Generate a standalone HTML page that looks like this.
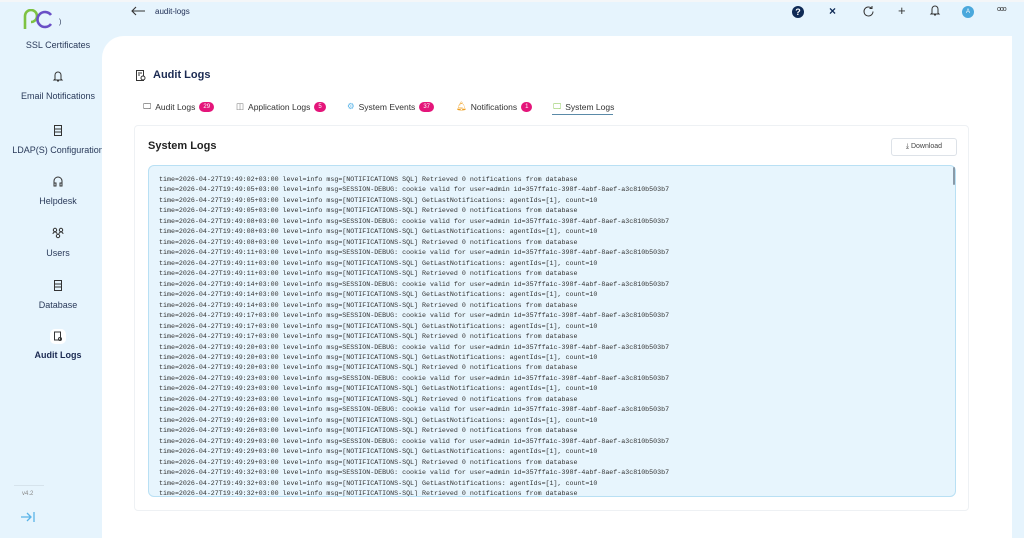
<!DOCTYPE html>
<html><head><meta charset="utf-8"><style>
*{margin:0;padding:0;box-sizing:border-box}
body{width:1024px;height:538px;overflow:hidden;background:#e6f4fd;font-family:"Liberation Sans",sans-serif;position:relative;color:#1f2d4d}
.side{position:absolute;left:0;top:0;width:102px;height:538px}
.nav{position:absolute;left:0;width:116px;text-align:center;font-size:9px;color:#2a3a5a}
.nav svg{display:block;margin:0 auto 8px}
.main{position:absolute;left:102px;top:36px;width:910px;height:502px;background:#fff;border-top-left-radius:22px}
.top{position:absolute;top:0;left:0;width:1024px;height:2px;background:#f4f6f8}
.card{position:absolute;left:134px;top:125px;width:835px;height:386px;border:1px solid #eef1f4;border-radius:4px;background:#fff}
.logs{position:absolute;left:148px;top:165px;width:808px;height:332px;background:#e7f5fd;border:1px solid #b9e0f4;border-radius:6px;padding:8px 0 0 10px;font-family:"Liberation Mono",monospace;font-size:6.65px;line-height:10.47px;color:#333;white-space:pre;overflow:hidden}
.tab{position:absolute;top:101px;font-size:8.5px;color:#333;display:flex;align-items:center;gap:4px}
.b{background:#e4157a;color:#fff;font-size:6px;border-radius:6px;padding:1px 4px;line-height:8px}
</style></head><body>
<div class="top"></div>
<div class="side">
<svg style="position:absolute;left:22px;top:9px" width="32" height="22" viewBox="0 0 32 22"><path d="M3 20V7a6 6 0 1 1 6 6" fill="none" stroke="#7dc242" stroke-width="2.6"/><path d="M29 6a7.5 7.5 0 1 0 0 9" fill="none" stroke="#6a4fc6" stroke-width="2.6"/></svg>
<span style="position:absolute;left:59px;top:19px;font-size:7px">)</span>
<div class="nav" style="top:40px;left:0">SSL Certificates</div>
<div class="nav" style="top:70px;left:0"><svg width="12" height="13" viewBox="0 0 12 13"><path d="M3 9V5a3 3 0 0 1 6 0v4l1 1H2zM5 11h2" fill="none" stroke="#333" stroke-width="1"/></svg>Email Notifications</div>
<div class="nav" style="top:124px;left:0"><svg width="12" height="13" viewBox="0 0 12 13"><rect x="2.5" y="1.5" width="7" height="10" fill="none" stroke="#333"/><path d="M2.5 5h7M2.5 8h7" stroke="#333"/></svg>LDAP(S) Configuration</div>
<div class="nav" style="top:175px;left:0"><svg width="12" height="13" viewBox="0 0 12 13"><path d="M2 9V6a4 4 0 0 1 8 0v3M2 8h2v3H2zM8 8h2v3H8z" fill="none" stroke="#333"/></svg>Helpdesk</div>
<div class="nav" style="top:227px;left:0"><svg width="12" height="13" viewBox="0 0 12 13"><circle cx="3" cy="3" r="1.7" fill="none" stroke="#333"/><circle cx="9" cy="3" r="1.7" fill="none" stroke="#333"/><circle cx="6" cy="9" r="1.7" fill="none" stroke="#333"/><path d="M1 7a2 2 0 0 1 4 0M7 7a2 2 0 0 1 4 0" fill="none" stroke="#333"/></svg>Users</div>
<div class="nav" style="top:279px;left:0"><svg width="12" height="13" viewBox="0 0 12 13"><rect x="2.5" y="1.5" width="7" height="10" fill="none" stroke="#333"/><path d="M2.5 5h7M2.5 8h7" stroke="#333"/></svg>Database</div>
<div class="nav" style="top:329px;left:0;font-weight:bold;color:#1b2a52"><svg width="16" height="15" viewBox="0 0 16 15" style="background:#fff;border-radius:5px;margin-bottom:6px"><rect x="4.5" y="3" width="6" height="8" fill="none" stroke="#333"/><circle cx="10" cy="10" r="1.5" fill="none" stroke="#333"/></svg>Audit Logs</div>
<div style="position:absolute;left:14px;top:485px;width:30px;border-top:1px solid #d6e3ec"></div>
<div style="position:absolute;left:22px;top:491px;font-size:6px;color:#888">v4.2</div>
<svg style="position:absolute;left:20px;top:511px" width="16" height="12" viewBox="0 0 16 12"><path d="M1 6h10M7 2l4 4-4 4M14 1v10" fill="none" stroke="#5ab4e8" stroke-width="1.3"/></svg>
</div>
<svg style="position:absolute;left:130px;top:6px" width="16" height="10" viewBox="0 0 16 10"><path d="M15 5H2M6 1L2 5l4 4" fill="none" stroke="#333" stroke-width="1.1"/></svg>
<div style="position:absolute;left:155px;top:7px;font-size:8px;color:#1b2a52">audit-logs</div>
<div style="position:absolute;left:792px;top:6px;width:12px;height:12px;border-radius:50%;background:#0f2a55;color:#fff;font-size:9px;font-weight:bold;text-align:center;line-height:12px">?</div>
<div style="position:absolute;left:829px;top:4px;font-size:12px;color:#0f2a55;font-weight:bold">×</div>
<svg style="position:absolute;left:862px;top:5px" width="13" height="13" viewBox="0 0 13 13"><path d="M11 6.5a4.5 4.5 0 1 1-1.3-3.2M10 1v2.5H7.5" fill="none" stroke="#333"/></svg>
<div style="position:absolute;left:898px;top:3px;font-size:13px;color:#333">+</div>
<svg style="position:absolute;left:929px;top:4px" width="12" height="13" viewBox="0 0 12 13"><path d="M3 9V5a3 3 0 0 1 6 0v4l1 1H2zM5 11h2" fill="none" stroke="#333"/></svg>
<div style="position:absolute;left:962px;top:6px;width:12px;height:12px;border-radius:50%;background:#4aa8dc;color:#fff;font-size:6px;text-align:center;line-height:12px">A</div>
<div style="position:absolute;left:997px;top:6px;font-size:7px;color:#333;letter-spacing:-1px">ooo</div>
<div class="main"></div>
<svg style="position:absolute;left:135px;top:69px" width="12" height="13" viewBox="0 0 12 13"><rect x="1.5" y="1.5" width="7" height="10" fill="none" stroke="#333"/><path d="M3 4h4M3 6h2" stroke="#333"/><circle cx="8" cy="9" r="2" fill="#fff" stroke="#333"/></svg>
<div style="position:absolute;left:153px;top:69px;font-size:11px;font-weight:bold;color:#1b2a52">Audit Logs</div>
<div class="tab" style="left:143px"><span>🖵</span>Audit Logs <span class="b">29</span></div>
<div class="tab" style="left:236px"><span style="color:#777">◫</span>Application Logs <span class="b">5</span></div>
<div class="tab" style="left:347px"><span style="color:#5ab4e8">⚙</span>System Events <span class="b">37</span></div>
<div class="tab" style="left:456px"><span style="color:#f0a020">🔔︎</span>Notifications <span class="b">1</span></div>
<div class="tab" style="left:553px"><span style="color:#7dc242">🖵</span>System Logs</div>
<div style="position:absolute;left:552px;top:114px;width:61px;height:1px;background:#5a8aa8"></div>
<div class="card"></div>
<div style="position:absolute;left:148px;top:140px;font-size:11px;font-weight:bold;color:#222">System Logs</div>
<div style="position:absolute;left:891px;top:138px;width:66px;height:18px;border:1px solid #dde2e8;border-radius:3px;font-size:7px;color:#444;text-align:center;line-height:16px">⤓ Download</div>
<div class="logs">time=2026-04-27T19:49:02+03:00 level=info msg=[NOTIFICATIONS SQL] Retrieved 0 notifications from database
time=2026-04-27T19:49:05+03:00 level=info msg=SESSION-DEBUG: cookie valid for user=admin id=357ffa1c-398f-4abf-8aef-a3c810b503b7
time=2026-04-27T19:49:05+03:00 level=info msg=[NOTIFICATIONS-SQL] GetLastNotifications: agentIds=[1], count=10
time=2026-04-27T19:49:05+03:00 level=info msg=[NOTIFICATIONS-SQL] Retrieved 0 notifications from database
time=2026-04-27T19:49:08+03:00 level=info msg=SESSION-DEBUG: cookie valid for user=admin id=357ffa1c-398f-4abf-8aef-a3c810b503b7
time=2026-04-27T19:49:08+03:00 level=info msg=[NOTIFICATIONS-SQL] GetLastNotifications: agentIds=[1], count=10
time=2026-04-27T19:49:08+03:00 level=info msg=[NOTIFICATIONS-SQL] Retrieved 0 notifications from database
time=2026-04-27T19:49:11+03:00 level=info msg=SESSION-DEBUG: cookie valid for user=admin id=357ffa1c-398f-4abf-8aef-a3c810b503b7
time=2026-04-27T19:49:11+03:00 level=info msg=[NOTIFICATIONS-SQL] GetLastNotifications: agentIds=[1], count=10
time=2026-04-27T19:49:11+03:00 level=info msg=[NOTIFICATIONS-SQL] Retrieved 0 notifications from database
time=2026-04-27T19:49:14+03:00 level=info msg=SESSION-DEBUG: cookie valid for user=admin id=357ffa1c-398f-4abf-8aef-a3c810b503b7
time=2026-04-27T19:49:14+03:00 level=info msg=[NOTIFICATIONS-SQL] GetLastNotifications: agentIds=[1], count=10
time=2026-04-27T19:49:14+03:00 level=info msg=[NOTIFICATIONS-SQL] Retrieved 0 notifications from database
time=2026-04-27T19:49:17+03:00 level=info msg=SESSION-DEBUG: cookie valid for user=admin id=357ffa1c-398f-4abf-8aef-a3c810b503b7
time=2026-04-27T19:49:17+03:00 level=info msg=[NOTIFICATIONS-SQL] GetLastNotifications: agentIds=[1], count=10
time=2026-04-27T19:49:17+03:00 level=info msg=[NOTIFICATIONS-SQL] Retrieved 0 notifications from database
time=2026-04-27T19:49:20+03:00 level=info msg=SESSION-DEBUG: cookie valid for user=admin id=357ffa1c-398f-4abf-8aef-a3c810b503b7
time=2026-04-27T19:49:20+03:00 level=info msg=[NOTIFICATIONS-SQL] GetLastNotifications: agentIds=[1], count=10
time=2026-04-27T19:49:20+03:00 level=info msg=[NOTIFICATIONS-SQL] Retrieved 0 notifications from database
time=2026-04-27T19:49:23+03:00 level=info msg=SESSION-DEBUG: cookie valid for user=admin id=357ffa1c-398f-4abf-8aef-a3c810b503b7
time=2026-04-27T19:49:23+03:00 level=info msg=[NOTIFICATIONS-SQL] GetLastNotifications: agentIds=[1], count=10
time=2026-04-27T19:49:23+03:00 level=info msg=[NOTIFICATIONS-SQL] Retrieved 0 notifications from database
time=2026-04-27T19:49:26+03:00 level=info msg=SESSION-DEBUG: cookie valid for user=admin id=357ffa1c-398f-4abf-8aef-a3c810b503b7
time=2026-04-27T19:49:26+03:00 level=info msg=[NOTIFICATIONS-SQL] GetLastNotifications: agentIds=[1], count=10
time=2026-04-27T19:49:26+03:00 level=info msg=[NOTIFICATIONS-SQL] Retrieved 0 notifications from database
time=2026-04-27T19:49:29+03:00 level=info msg=SESSION-DEBUG: cookie valid for user=admin id=357ffa1c-398f-4abf-8aef-a3c810b503b7
time=2026-04-27T19:49:29+03:00 level=info msg=[NOTIFICATIONS-SQL] GetLastNotifications: agentIds=[1], count=10
time=2026-04-27T19:49:29+03:00 level=info msg=[NOTIFICATIONS-SQL] Retrieved 0 notifications from database
time=2026-04-27T19:49:32+03:00 level=info msg=SESSION-DEBUG: cookie valid for user=admin id=357ffa1c-398f-4abf-8aef-a3c810b503b7
time=2026-04-27T19:49:32+03:00 level=info msg=[NOTIFICATIONS-SQL] GetLastNotifications: agentIds=[1], count=10
time=2026-04-27T19:49:32+03:00 level=info msg=[NOTIFICATIONS-SQL] Retrieved 0 notifications from database</div>
<div style="position:absolute;left:953px;top:167px;width:2px;height:18px;background:#8a9aa8;border-radius:1px"></div>
</body></html>
